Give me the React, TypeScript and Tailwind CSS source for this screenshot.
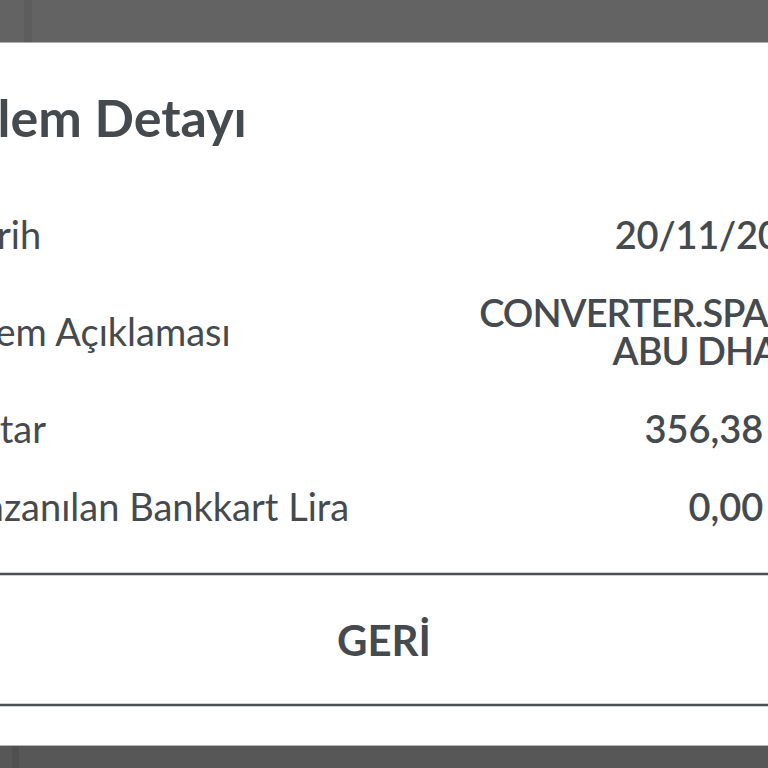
import React from "react";

const rows: { label: string; value: string[]; cls: string }[] = [
  { label: "Tarih", value: ["20/11/2023"], cls: "mr-[-15px] tracking-[-0.3px]" },
  { label: "İşlem Açıklaması", value: ["CONVERTER.SPACE", "ABU DHABI"], cls: "mr-[-4px] tracking-[-1px]" },
  { label: "Tutar", value: ["356,38 TL"], cls: "mr-[-6px]" },
  { label: "Kazanılan Bankkart Lira", value: ["0,00 TL"], cls: "mr-[-6px]" },
];

function Divider() {
  return (
    <div className="h-[4px] shrink-0 border-y border-[#cfd1d2] bg-[#4b5055]" />
  );
}

export default function App() {
  return (
    <div className="w-[768px] h-[768px] overflow-hidden bg-white flex flex-col font-['Lato',sans-serif] text-[#454a4f]">
      <div className="h-[42px] shrink-0 bg-[#636363] flex">
        <div className="ml-[24px] w-[8px] bg-[#5d5d5d]" />
      </div>
      <div className="h-px shrink-0 bg-[#ababab]" />
      <div className="w-[848px] ml-[-40px] shrink-0 flex flex-col">
        <div className="mt-[48px] text-[52px] leading-[52px] font-bold">İşlem Detayı</div>
        <div className="mt-[72px] flex flex-col gap-[40px]">
          {rows.map((r) => (
            <div key={r.label} className="flex items-center justify-between">
              <div className="text-[38px] leading-[38px] font-normal whitespace-nowrap">{r.label}</div>
              <div className={"flex flex-col items-end text-[38px] leading-[38px] font-semibold whitespace-nowrap " + r.cls}>
                {r.value.map((v) => (
                  <span key={v}>{v}</span>
                ))}
              </div>
            </div>
          ))}
        </div>
      </div>
      <div className="mt-[47px]">
        <Divider />
      </div>
      <div className="h-[127px] shrink-0 flex items-center justify-center text-[42px] font-bold leading-none">
        GERİ
      </div>
      <Divider />
      <div className="flex-1 bg-white" />
      <div className="h-px shrink-0 bg-[#b5b5b5]" />
      <div className="h-[22px] shrink-0 bg-[#575757] flex">
        <div className="ml-[12px] w-[7px] bg-[#505050]" />
      </div>
    </div>
  );
}
